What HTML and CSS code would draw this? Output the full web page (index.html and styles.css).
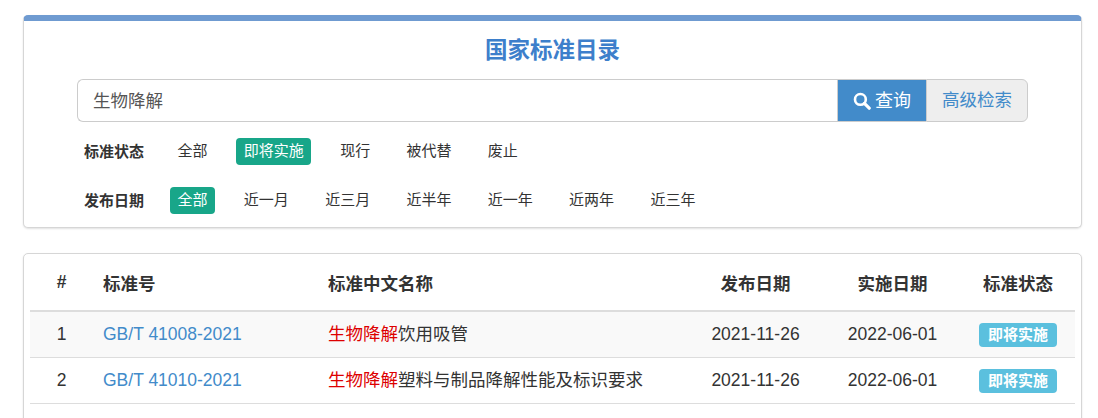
FILE: index.html
```html
<!DOCTYPE html>
<html lang="zh-CN">
<head>
<meta charset="utf-8">
<title>国家标准目录</title>
<link rel="stylesheet" href="styles.css">
</head>
<body>
<section class="panel search-panel">
  <h1 class="title">国家标准目录</h1>
  <form class="search">
    <input class="search-input" type="text" value="生物降解">
    <button class="btn btn-primary" type="button">
      <svg class="icon" viewBox="0 0 18 18" width="18" height="18" aria-hidden="true"><circle cx="7.4" cy="7.4" r="5.4" fill="none" stroke="currentColor" stroke-width="2.6"/><path d="M11.4 11.4l4.8 4.8" fill="none" stroke="currentColor" stroke-width="3.2" stroke-linecap="round"/></svg>查询</button>
    <button class="btn btn-default" type="button">高级检索</button>
  </form>
  <div class="filter filter-status">
    <span class="filter-label">标准状态</span>
    <a class="chip">全部</a><a class="chip active">即将实施</a><a class="chip">现行</a><a class="chip">被代替</a><a class="chip">废止</a>
  </div>
  <div class="filter filter-date">
    <span class="filter-label">发布日期</span>
    <a class="chip active">全部</a><a class="chip">近一月</a><a class="chip">近三月</a><a class="chip">近半年</a><a class="chip">近一年</a><a class="chip">近两年</a><a class="chip">近三年</a>
  </div>
</section>
<section class="panel table-panel">
  <table class="results">
    <colgroup><col class="c-num"><col class="c-code"><col class="c-name"><col class="c-date"><col class="c-date2"><col class="c-state"></colgroup>
    <thead>
      <tr><th class="center">#</th><th>标准号</th><th>标准中文名称</th><th class="center">发布日期</th><th class="center">实施日期</th><th class="center">标准状态</th></tr>
    </thead>
    <tbody>
      <tr class="odd"><td class="center">1</td><td><a class="code">GB/T 41008-2021</a></td><td class="name"><em class="hit">生物降解</em>饮用吸管</td><td class="center">2021-11-26</td><td class="center">2022-06-01</td><td class="center"><span class="badge">即将实施</span></td></tr>
      <tr><td class="center">2</td><td><a class="code">GB/T 41010-2021</a></td><td class="name"><em class="hit">生物降解</em>塑料与制品降解性能及标识要求</td><td class="center">2021-11-26</td><td class="center">2022-06-01</td><td class="center"><span class="badge">即将实施</span></td></tr>
    </tbody>
  </table>
</section>
</body>
</html>
```
FILE: styles.css
```css
* { box-sizing: border-box; }
html, body { margin: 0; height: 418px; overflow: hidden; background: #fff; }
body {
  padding: 15px 16px 0 23px;
  font-family: "Liberation Sans", "Noto Sans CJK SC", sans-serif;
  color: #333;
  font-size: 16px;
}
.panel {
  background: #fff;
  border: 1px solid #d6d6d6;
  border-radius: 5px;
  box-shadow: 0 1px 2px rgba(0, 0, 0, .12);
}
.search-panel {
  height: 213px;
  border-top: 6px solid #6f9bd1;
  padding: 0 53px;
}
.title {
  margin: 0;
  padding-top: 14px;
  height: 58px;
  text-align: center;
  font-size: 22.5px;
  line-height: 32px;
  font-weight: 700;
  color: #3d7fcb;
}
.search { display: flex; height: 43px; }
.search-input {
  flex: 1;
  min-width: 0;
  height: 43px;
  padding: 0 15px 2px;
  border: 1px solid #ccc;
  border-right: 0;
  border-radius: 6px 0 0 6px;
  font: 17.5px "Liberation Sans", "Noto Sans CJK SC", sans-serif;
  color: #555;
  outline: none;
}
.btn {
  height: 43px;
  border: 1px solid #ccc;
  font: 17.5px/1 "Liberation Sans", "Noto Sans CJK SC", sans-serif;
  display: flex;
  align-items: center;
  justify-content: center;
  padding: 0;
}
.btn-primary { width: 89px; background: #428bca; border-color: #ccc; border-width: 1px 0 1px 1px; color: #fff; gap: 4px; font-size: 18px; }
.btn-default { width: 102px; background: #eee; color: #428bca; border-left: 1px solid #ccc; border-radius: 0 6px 6px 0; }
.icon { display: block; }
.filter { display: flex; align-items: center; height: 27px; padding-left: 7px; font-size: 15px; }
.filter-status { margin-top: 16px; }
.filter-date { margin-top: 22px; }
.filter-label { width: 86px; font-weight: 700; line-height: 27px; }
.chip {
  height: 27px;
  line-height: 26px;
  padding: 0 7.5px;
  margin-right: 21.3px;
  border-radius: 4px;
  color: #333;
}
.chip.active { background: #18a689; color: #fff; }
.table-panel {
  margin-top: 25px;
  height: 180px;
  padding: 0 6px;
}
.results { width: 100%; border-collapse: collapse; table-layout: fixed; font-size: 17.5px; }
.c-num { width: 63px; }
.c-code { width: 225px; }
.c-name { width: 369px; }
.c-date { width: 137px; }
.c-date2 { width: 137px; }
.results th {
  height: 57px;
  padding: 1px 10px 0;
  text-align: left;
  font-weight: 700;
  border-bottom: 2px solid #ddd;
}
.results td { height: 46px; padding: 0 10px; border-bottom: 1px solid #ddd; }
.results td.name { padding-bottom: 3px; }
.results .center { text-align: center; }
.odd { background: #f9f9f9; }
.code { color: #428bca; }
.hit { font-style: normal; color: #d00; }
.badge {
  display: inline-block;
  width: 78px;
  height: 24px;
  margin-top: 2px;
  line-height: 23px;
  border-radius: 4px;
  background: #5bc0de;
  color: #fff;
  font-size: 15px;
  font-weight: 700;
  text-align: center;
  vertical-align: middle;
}
```
